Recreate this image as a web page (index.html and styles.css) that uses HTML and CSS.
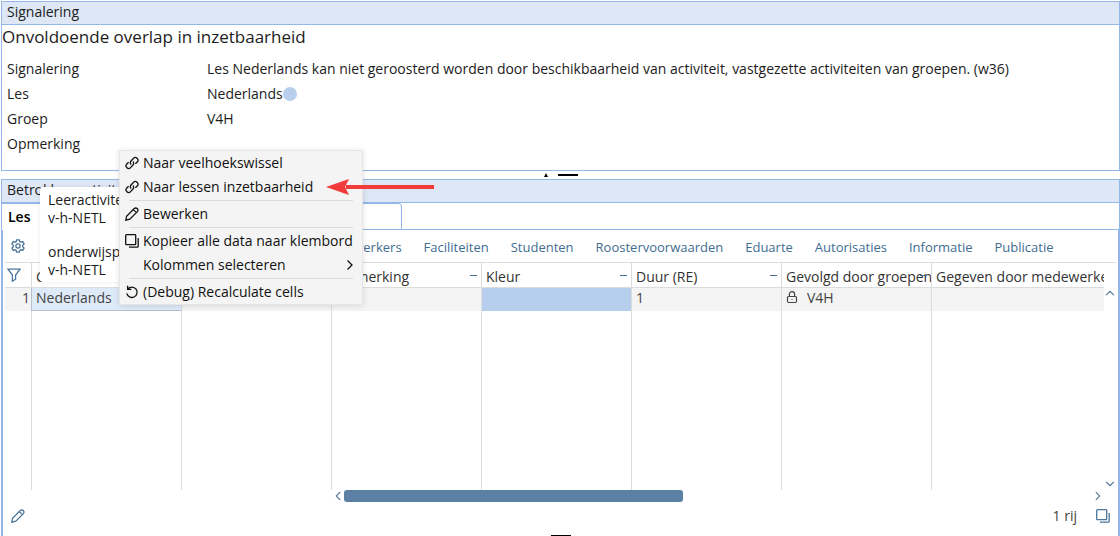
FILE: index.html
```html
<!DOCTYPE html>
<html lang="nl">
<head>
    <meta charset="UTF-8">
    <meta name="viewport" content="width=device-width, initial-scale=1.0">
    <title>Signalering</title>
    <link rel="stylesheet" href="styles.css">
</head>
<body>
    <!-- Shared icons -->
    <svg class="icon-defs" width="0" height="0">
        <symbol id="icon-link" viewBox="0 0 14 14">
            <path d="M6.2 8.6a2.5 2.5 0 0 1-0.2-3.6l2.4-2.6a2.6 2.6 0 0 1 3.8 3.6L10.4 7.8"/>
            <path d="M7.8 5.4a2.5 2.5 0 0 1 0.2 3.6l-2.4 2.6a2.6 2.6 0 0 1-3.8-3.6L3.6 6.2"/>
        </symbol>
        <symbol id="icon-pencil" viewBox="0 0 14 14">
            <path d="M0.8 13.2l0.8-4 7.6-7.6q1.6-1.3 3 0t0.2 3L4.8 12.2zM8.4 2.6l3 3"/>
        </symbol>
        <symbol id="icon-copy" viewBox="0 0 14 14">
            <rect x="0.7" y="0.7" width="10" height="10" rx="0.8"/>
            <path d="M13.2 4v8.2q0 1-1 1H4"/>
        </symbol>
        <symbol id="icon-undo" viewBox="0 0 14 14">
            <path d="M3 3.8a5.2 5.2 0 1 1-1.2 4.6M2.6 0.8v3.6h3.8"/>
        </symbol>
        <symbol id="icon-chevron" viewBox="0 0 14 14">
            <path d="M4.5 2.5L9 7l-4.5 4.5"/>
        </symbol>
    </svg>

    <!-- Signal details -->
    <section class="panel">
        <h2 class="panel-title">Signalering</h2>
        <h1 class="signal-heading">Onvoldoende overlap in inzetbaarheid</h1>
        <dl class="details">
            <dt>Signalering</dt>
            <dd>Les Nederlands kan niet geroosterd worden door beschikbaarheid van activiteit, vastgezette activiteiten van groepen. (w36)</dd>
            <dt>Les</dt>
            <dd>Nederlands<span class="dot"></span></dd>
            <dt>Groep</dt>
            <dd>V4H</dd>
            <dt>Opmerking</dt>
            <dd></dd>
        </dl>
    </section>

    <div class="splitter">
        <span class="splitter-arrow"></span>
        <span class="splitter-grip"></span>
    </div>

    <!-- Activities -->
    <section class="panel panel-fill">
        <h2 class="panel-title">Betrokken activiteiten</h2>
        <div class="tabs">
            <button class="tab active">Les</button>
            <button class="tab"></button>
        </div>
        <div class="tab-content">
            <nav class="toolbar">
                <button class="icon-btn" aria-label="Instellingen">
                    <svg class="icon" viewBox="0 0 14 14"><path d="M5.6 0.8h2.8l0.4 1.8 1.1 0.6 1.8-0.6 1.4 2.4-1.4 1.3v1.4l1.4 1.3-1.4 2.4-1.8-0.6-1.1 0.6-0.4 1.8H5.6l-0.4-1.8-1.1-0.6-1.8 0.6L0.9 9l1.4-1.3V6.3L0.9 5l1.4-2.4 1.8 0.6 1.1-0.6z"/><circle cx="7" cy="7" r="2.1"/></svg>
                </button>
                <div class="toolbar-links">
                    <a href="#">Medewerkers</a>
                    <a href="#">Faciliteiten</a>
                    <a href="#">Studenten</a>
                    <a href="#">Roostervoorwaarden</a>
                    <a href="#">Eduarte</a>
                    <a href="#">Autorisaties</a>
                    <a href="#">Informatie</a>
                    <a href="#">Publicatie</a>
                </div>
            </nav>

            <div class="grid">
                <div class="grid-scroll">
                    <table class="grid-table">
                        <colgroup>
                            <col class="col-index">
                            <col class="col-data">
                            <col class="col-data">
                            <col class="col-data">
                            <col class="col-data">
                            <col class="col-data">
                            <col class="col-data">
                            <col>
                        </colgroup>
                        <thead>
                            <tr>
                                <th class="filter"><svg class="icon" viewBox="0 0 14 14"><path d="M1 1.2h12L8.6 7v4.2l-3.2 2V7z"/></svg></th>
                                <th>Code</th>
                                <th></th>
                                <th>Opmerking<span class="sort"></span></th>
                                <th>Kleur<span class="sort"></span></th>
                                <th>Duur (RE)<span class="sort"></span></th>
                                <th>Gevolgd door groepen<span class="sort"></span></th>
                                <th>Gegeven door medewerkers</th>
                            </tr>
                        </thead>
                        <tbody>
                            <tr class="data-row">
                                <td class="index">1</td>
                                <td class="selected">Nederlands</td>
                                <td></td>
                                <td></td>
                                <td class="color"></td>
                                <td>1</td>
                                <td><span class="locked"><svg class="lock" viewBox="0 0 12 14"><rect x="1.5" y="5.5" width="9" height="6" rx="1.2"/><path d="M3.4 5.5V3.2a2.6 2.6 0 0 1 5.2 0v2.3M6 8v1"/></svg>V4H</span></td>
                                <td></td>
                            </tr>
                            <tr class="empty-row">
                                <td></td><td></td><td></td><td></td><td></td><td></td><td></td><td></td>
                            </tr>
                        </tbody>
                    </table>
                </div>
                <div class="vscroll">
                    <svg class="arrow up" viewBox="0 0 14 14"><use href="#icon-chevron"/></svg>
                    <svg class="arrow down" viewBox="0 0 14 14"><use href="#icon-chevron"/></svg>
                </div>
            </div>

            <div class="hscroll">
                <svg class="arrow left" viewBox="0 0 14 14"><use href="#icon-chevron"/></svg>
                <div class="track"><div class="thumb"></div></div>
                <svg class="arrow" viewBox="0 0 14 14"><use href="#icon-chevron"/></svg>
            </div>

            <footer class="grid-footer">
                <button class="icon-btn" aria-label="Bewerken"><svg class="icon"><use href="#icon-pencil"/></svg></button>
                <span class="count">1 rij</span>
                <button class="icon-btn" aria-label="Kopieer"><svg class="icon"><use href="#icon-copy"/></svg></button>
            </footer>
            <div class="bottom-grip"></div>
        </div>
    </section>

    <!-- Tooltip -->
    <div class="tooltip">
        <p>Leeractiviteit<br>v-h-NETL</p>
        <p>onderwijsproduct<br>v-h-NETL</p>
    </div>

    <!-- Context menu -->
    <div class="menu">
        <button><svg class="icon"><use href="#icon-link"/></svg>Naar veelhoekswissel</button>
        <button><svg class="icon"><use href="#icon-link"/></svg>Naar lessen inzetbaarheid</button>
        <hr>
        <button><svg class="icon"><use href="#icon-pencil"/></svg>Bewerken</button>
        <hr>
        <button><svg class="icon"><use href="#icon-copy"/></svg>Kopieer alle data naar klembord</button>
        <button class="no-icon">Kolommen selecteren<svg class="icon submenu"><use href="#icon-chevron"/></svg></button>
        <hr>
        <button><svg class="icon"><use href="#icon-undo"/></svg>(Debug) Recalculate cells</button>
    </div>

    <svg class="pointer" viewBox="0 0 108 16"><path d="M20 6h88v4H20z"/><path d="M0 8L23 0l-4 8 4 8z"/></svg>
</body>
</html>
```
FILE: styles.css
```css
* {
    box-sizing: border-box;
}

body {
    margin: 0;
    padding: 1px 0 0 1px;
    height: 100vh;
    display: flex;
    flex-direction: column;
    overflow: hidden;
    background: white;
    color: #1c1c1c;
    font-family: "Open Sans", "Noto Sans", sans-serif;
    font-size: 14px;
    line-height: 20px;
}

button {
    border: none;
    padding: 0;
    background: none;
    color: inherit;
    font: inherit;
    cursor: pointer;
}

.icon-defs {
    position: absolute;
}

.icon {
    width: 14px;
    height: 14px;
    flex: none;
    display: block;
    fill: none;
    stroke: currentColor;
    stroke-width: 1.3;
}

/* Panels */
.panel {
    border: 1px solid #92b7e8;
}

.panel-title {
    margin: 0;
    padding: 0 5px;
    height: 23px;
    line-height: 20px;
    border-bottom: 1px solid #92b7e8;
    background: #dee7f6;
    font-size: 14px;
    font-weight: normal;
}

.signal-heading {
    margin: 0;
    height: 31px;
    line-height: 24px;
    font-size: 17px;
    font-weight: normal;
}

.details {
    display: grid;
    grid-template-columns: 200px 1fr;
    grid-auto-rows: 25px;
    margin: 0;
    padding: 0 5px 14px;
    line-height: 25px;
}

.details dd {
    margin: 0;
    display: flex;
    align-items: center;
}

.dot {
    width: 14px;
    height: 14px;
    border-radius: 50%;
    background: #b8ceed;
}

.splitter {
    height: 8px;
    flex: none;
    display: flex;
    justify-content: center;
    align-items: center;
    gap: 10px;
}

.splitter-arrow {
    border: 2px solid transparent;
    border-top: none;
    border-bottom: 4px solid black;
}

.splitter-grip {
    width: 20px;
    height: 2px;
    background: black;
}

/* Tabs */
.panel-fill {
    flex: 1;
    min-height: 0;
    display: flex;
    flex-direction: column;
    border-width: 1px 0 0;
}

.panel-fill .panel-title {
    flex: none;
    border-left: 1px solid #92b7e8;
    border-right: 1px solid #92b7e8;
}

.tabs {
    flex: none;
    height: 27px;
    display: flex;
    border: 1px solid #92b7e8;
    border-width: 0 1px 1px;
}

.tab {
    width: 200px;
    height: 27px;
    padding: 0 6px;
    text-align: left;
    border: 1px solid #92b7e8;
    border-left: none;
    border-radius: 0 4px 0 0;
}

.tab.active {
    background: white;
    border-bottom-color: white;
    font-weight: 600;
    color: black;
}

.tab-content {
    flex: 1;
    min-height: 0;
    display: flex;
    flex-direction: column;
    padding: 0 2px;
    border: 2px solid #92b7e8;
    border-width: 0 2px;
}

.toolbar {
    flex: none;
    height: 33px;
    display: flex;
    align-items: center;
    justify-content: flex-start;
    padding-left: 6px;
    border-bottom: 1px solid #dcdcdc;
}

.icon-btn {
    color: #4c769c;
}

.toolbar-links {
    display: flex;
    gap: 22px;
    padding: 2px 0 0 294px;
    font-size: 13px;
}

.toolbar-links a {
    color: #416d92;
    text-decoration: none;
}

/* Grid */
.grid {
    flex: 1;
    min-height: 0;
    display: flex;
}

.grid-scroll {
    flex: 1;
    overflow: hidden;
}

.grid-table {
    width: 100%;
    height: 100%;
    table-layout: fixed;
    border-collapse: separate;
    border-spacing: 0;
    color: #444;
}

.col-index {
    width: 27px;
}

.col-data {
    width: 150px;
}

.grid-table th,
.grid-table td {
    padding: 0 4px;
    border-right: 1px solid #dcdcdc;
    text-align: left;
    font-weight: normal;
    white-space: nowrap;
    overflow: hidden;
}

.grid-table th {
    position: relative;
    height: 25px;
    padding-top: 3px;
    border-bottom: 1px solid #dcdcdc;
    color: #333;
}

.grid-table th:last-child,
.grid-table td:last-child {
    border-right: none;
    padding-right: 0;
}

.grid-table .filter {
    padding: 0 2px;
    color: #4c769c;
}

.sort {
    position: absolute;
    right: 4px;
    top: 12px;
    width: 7px;
    height: 1px;
    background: #416d92;
}

.grid-table .data-row td {
    height: 23px;
    padding-bottom: 3px;
    line-height: 18px;
    background: #f4f4f4;
}

.grid-table .data-row .index {
    padding-right: 1px;
    text-align: right;
    border-right: 1px solid #b5bfd0;
}

.grid-table .data-row .selected {
    background: #dfeaf8;
    border-bottom: 1px solid #b5bfd0;
}

.grid-table .data-row .color {
    background: #b8ceed;
}

.locked {
    display: flex;
    align-items: center;
    gap: 9px;
}

.lock {
    width: 12px;
    height: 14px;
    fill: none;
    stroke: #444;
    stroke-width: 1.2;
}

.vscroll {
    width: 12px;
    display: flex;
    flex-direction: column;
    justify-content: space-between;
    padding-top: 24px;
}

.arrow {
    width: 12px;
    height: 12px;
    flex: none;
    fill: none;
    stroke: #4c769c;
    stroke-width: 1.3;
}

.up {
    transform: rotate(-90deg);
}

.down {
    transform: rotate(90deg);
}

.left {
    transform: rotate(180deg);
}

.hscroll {
    flex: none;
    height: 12px;
    display: flex;
    align-items: center;
    padding: 0 12px 0 327px;
}

.track {
    flex: 1;
}

.thumb {
    width: 339px;
    max-width: 100%;
    height: 12px;
    border-radius: 3px;
    background: #5b80a3;
}

.grid-footer {
    flex: none;
    height: 33px;
    display: flex;
    align-items: center;
    gap: 19px;
    padding: 0 6px 6px;
    color: #444;
}

.count {
    margin-left: auto;
}

.bottom-grip {
    flex: none;
    align-self: center;
    width: 20px;
    height: 1px;
    background: black;
}

/* Floating parts */
.tooltip {
    position: absolute;
    left: 40px;
    top: 187px;
    width: 140px;
    height: 95px;
    padding: 4px 8px;
    border-radius: 3px;
    background: white;
    box-shadow: 0 0 4px rgba(0, 0, 0, 0.08);
    line-height: 18px;
}

.tooltip p {
    margin: 0 0 16px;
}

.menu {
    position: absolute;
    left: 119px;
    top: 150px;
    width: 244px;
    border: 1px solid #e6e6e6;
    background: #f4f4f4;
    box-shadow: 0 1px 6px rgba(0, 0, 0, 0.12);
    color: #111;
}

.menu button {
    width: 100%;
    height: 24px;
    display: flex;
    align-items: center;
    gap: 4px;
    padding: 0 5px;
    white-space: nowrap;
}

.menu .no-icon {
    padding-left: 23px;
}

.menu .submenu {
    margin-left: auto;
}

.menu hr {
    height: 1px;
    margin: 1px 9px;
    border: none;
    background: #dcdcdc;
}

.pointer {
    position: absolute;
    left: 326px;
    top: 179px;
    width: 108px;
    height: 16px;
    fill: #f23b3b;
}
```
